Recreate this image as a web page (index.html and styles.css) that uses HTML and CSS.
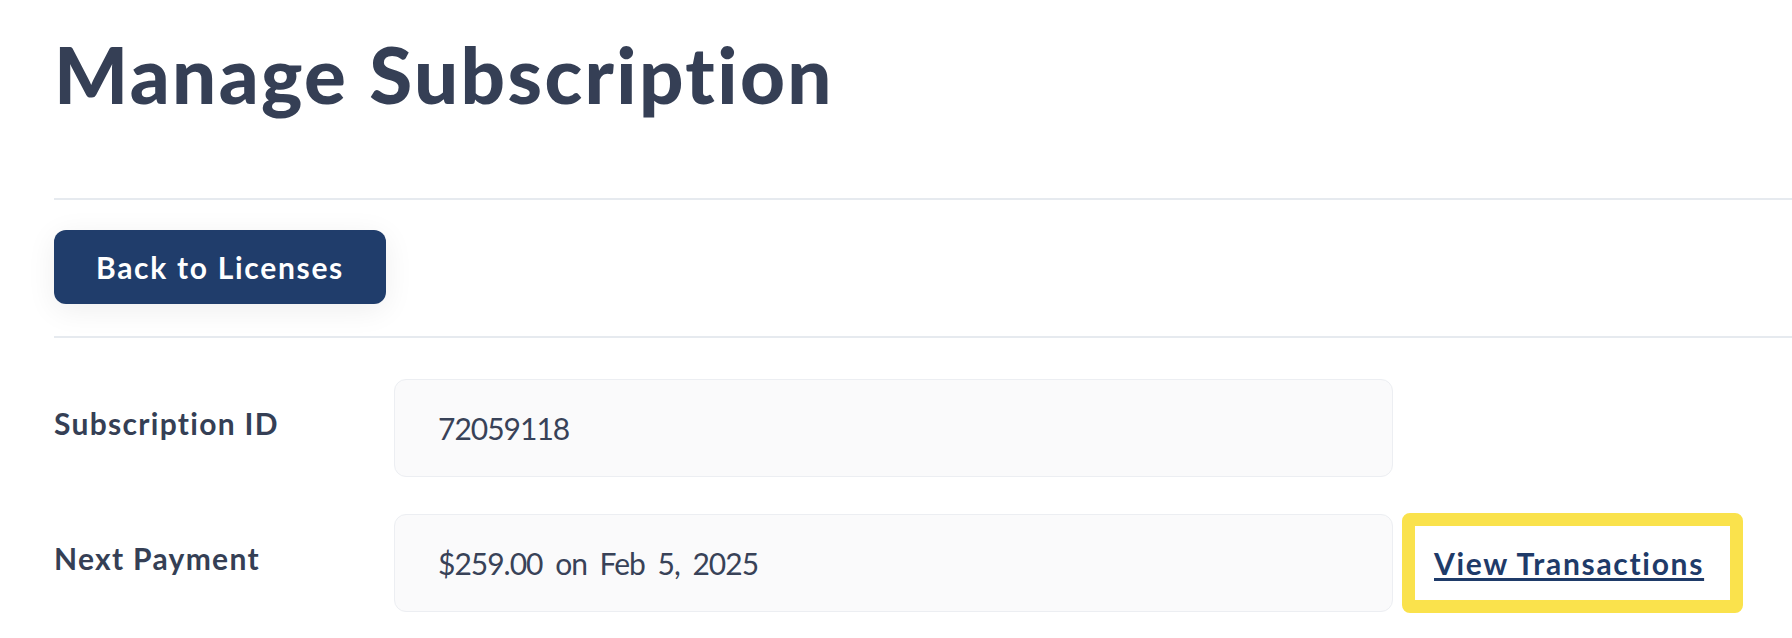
FILE: index.html
```html
<!DOCTYPE html>
<html lang="en">
<head>
    <meta charset="UTF-8">
    <meta name="viewport" content="width=device-width, initial-scale=1.0">
    <title>Manage Subscription</title>
    <link rel="stylesheet" href="styles.css">
</head>
<body>
    <div class="page">
        <h1>Manage Subscription</h1>
        <div class="toolbar">
            <button class="back-btn">Back to Licenses</button>
        </div>
        <div class="details">
            <div class="row">
                <span class="label">Subscription ID</span>
                <div class="value">72059118</div>
            </div>
            <div class="row">
                <span class="label">Next Payment</span>
                <div class="value">$259.00 on Feb 5, 2025</div>
                <div class="highlight">
                    <a href="#" class="link">View Transactions</a>
                </div>
            </div>
        </div>
    </div>
</body>
</html>
```

FILE: styles.css
```css
*{
  box-sizing:border-box;
}
body{
  margin:0;
  background:white;
  font-family:'Lato', 'Liberation Sans', sans-serif;
  color:#353f55;
}
.page{
  padding:35px 0 0 54px;
}
h1{
  margin:0 0 85px 0;
  font-size:78px;
  line-height:78px;
  font-weight:900;
  letter-spacing:2.4px;
  color:#353f55;
}
.toolbar{
  border-top:2px solid #e6eaef;
  border-bottom:2px solid #e6eaef;
  padding:30px 0 32px 0;
}
.back-btn{
  display:block;
  width:332px;
  height:74px;
  background-color:#203d6b;
  color:white;
  border:none;
  border-radius:12px;
  font-family:inherit;
  font-size:30px;
  font-weight:700;
  letter-spacing:1.7px;
  box-shadow:0 6px 30px rgba(0,0,0,0.07);
  cursor:pointer;
}
.details{
  padding-top:41px;
  display:flex;
  flex-direction:column;
  gap:36px;
}
.row{
  display:flex;
  align-items:center;
}
.label{
  width:340px;
  padding-bottom:10px;
  font-size:30px;
  font-weight:700;
  letter-spacing:1.3px;
}
.value{
  width:999px;
  height:98px;
  display:flex;
  align-items:center;
  padding-left:43px;
  background-color:#fafafb;
  border:1.5px solid #eceef2;
  border-radius:12px;
  font-size:30px;
  font-weight:400;
  letter-spacing:-1px;
  word-spacing:6px;
  color:#384258;
}
.highlight{
  margin-left:9px;
  width:341px;
  height:100px;
  border:13px solid #fae24c;
  border-radius:8px;
  padding-left:19px;
  display:flex;
  align-items:center;
}
.link{
  font-size:30px;
  font-weight:700;
  letter-spacing:1.7px;
  color:#1f3b69;
  text-decoration:underline;
  text-underline-offset:3px;
}
```
